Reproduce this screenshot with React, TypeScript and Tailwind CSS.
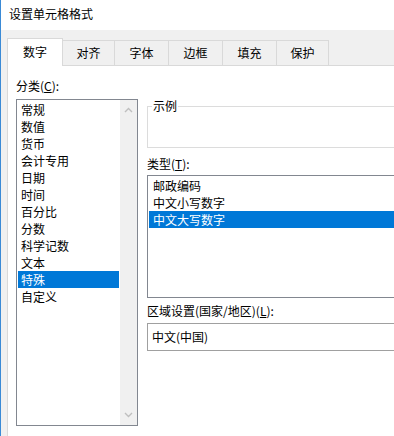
import type { ReactNode } from "react";

const tabs = [
  { label: "数字", w: "w-[56px]", active: true },
  { label: "对齐", w: "w-[53px]" },
  { label: "字体", w: "w-[55px]" },
  { label: "边框", w: "w-[55px]" },
  { label: "填充", w: "w-[55px]" },
  { label: "保护", w: "w-[53px]" },
];

const categories = [
  "常规",
  "数值",
  "货币",
  "会计专用",
  "日期",
  "时间",
  "百分比",
  "分数",
  "科学记数",
  "文本",
  "特殊",
  "自定义",
];

const types = ["邮政编码", "中文小写数字", "中文大写数字"];

function Chevron({ up }: { up?: boolean }) {
  return (
    <svg width="9" height="6" viewBox="0 0 9 6" className="block">
      <path
        d={up ? "M1 5 L4.5 1.5 L8 5" : "M1 1 L4.5 4.5 L8 1"}
        fill="none"
        stroke="#bfbfbf"
        strokeWidth="1.4"
      />
    </svg>
  );
}

function Label({ children, className }: { children: ReactNode; className?: string }) {
  return <div className={"h-4 leading-4 " + (className ?? "")}>{children}</div>;
}

export default function App() {
  return (
    <div
      className="w-[394px] h-[436px] overflow-hidden flex flex-col bg-[#f0f0f0] border-l border-[#3a8ad6] text-[12px] text-black"
      style={{ fontFamily: '"Noto Sans CJK SC", "Noto Sans", sans-serif' }}
    >
      {/* Title */}
      <div className="h-[30px] shrink-0 bg-white flex items-center pl-[8px] pb-[2px]">
        设置单元格格式
      </div>

      {/* Tabs */}
      <div className="flex items-end pt-[8px] pl-[6px] shrink-0">
        {tabs.map((t, i) => (
          <div
            key={t.label}
            className={
              t.active
                ? "relative z-10 h-[28px] -mb-px bg-white border border-b-0 border-[#d9d9d9] flex items-center justify-center pb-[1px] " + t.w
                : "h-[25px] -ml-px bg-[#f0f0f0] border border-b-0 border-[#d9d9d9] flex items-center justify-center " + t.w
            }
            style={i === 1 ? { marginLeft: -1 } : undefined}
          >
            {t.label}
          </div>
        ))}
      </div>

      {/* Panel */}
      <div className="flex-1 ml-[6px] bg-white border-t border-l border-[#d9d9d9] flex gap-[9px] pl-[8px]">
        {/* Category column */}
        <div className="flex flex-col shrink-0">
          <Label className="mt-[12px]">
            分类(<span className="underline">C</span>):
          </Label>
          <div className="mt-[5px] w-[122px] h-[327px] border border-[#828790] flex">
            <div className="flex-1 p-px">
              {categories.map((c) => (
                <div
                  key={c}
                  className={
                    "h-[17px] leading-[17px] pl-[3px] " +
                    (c === "特殊" ? "bg-[#0078d7] text-white" : "")
                  }
                >
                  {c}
                </div>
              ))}
            </div>
            <div className="w-[17px] bg-[#f0f0f0] flex flex-col items-center justify-between pt-[7px] pb-[7px]">
              <Chevron up />
              <Chevron />
            </div>
          </div>
        </div>

        {/* Right column */}
        <div className="flex flex-col w-[320px] shrink-0">
          <fieldset className="mt-[32px] h-[50px] border border-[#dcdcdc]">
            <legend className="ml-[4px] px-px leading-4">示例</legend>
          </fieldset>
          <Label className="mt-[8px]">
            类型(<span className="underline">T</span>):
          </Label>
          <div className="mt-[3px] h-[123px] border border-[#828790] p-px">
            {types.map((t) => (
              <div
                key={t}
                className={
                  "h-[17px] leading-[15px] pl-[3px] border border-transparent " +
                  (t === "中文大写数字"
                    ? "bg-[#0078d7] text-white border-dotted border-[#9cc8f0]"
                    : "")
                }
              >
                {t}
              </div>
            ))}
          </div>
          <Label className="mt-[5px]">
            区域设置(国家/地区)(<span className="underline">L</span>):
          </Label>
          <div className="mt-[4px] h-[28px] border border-[#a0a0a0] flex items-center pl-[4px]">
            中文(中国)
          </div>
        </div>
      </div>
    </div>
  );
}
